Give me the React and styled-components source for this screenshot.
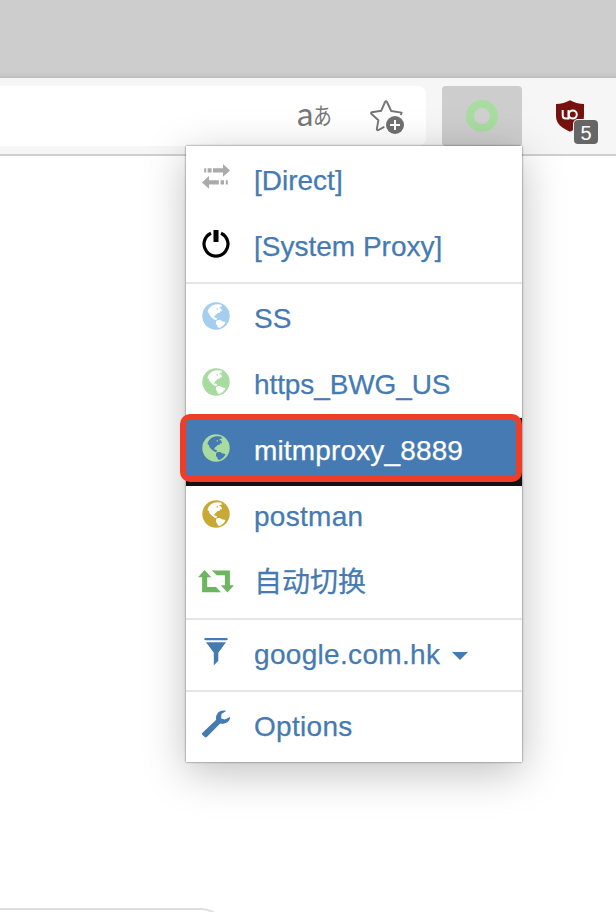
import React from "react";
import styled, { createGlobalStyle } from "styled-components";

const Global = createGlobalStyle`
  * { box-sizing: border-box; }
  html, body { margin: 0; height: 912px; overflow: hidden; background: #fff; }
  body { font-family: "Liberation Sans", "Noto Sans CJK SC", sans-serif; }
  svg { display: block; flex: none; }
`;

const Page = styled.div`
  position: relative;
  display: flex;
  flex-direction: column;
  width: 616px;
  height: 912px;
  overflow: hidden;
  background: #fff;
`;

const TabStrip = styled.div`
  height: 78px;
  flex: none;
  background: linear-gradient(#cdcdcd 72px, #c3c3c3);
  border-bottom: 1px solid #bcbcbc;
`;

const Toolbar = styled.div`
  display: flex;
  flex: none;
  height: 78px;
  padding-top: 8px;
  background: #f6f6f6;
  border-bottom: 2px solid #cfcfcf;
`;

const AddressBar = styled.div`
  display: flex;
  align-items: center;
  justify-content: flex-end;
  gap: 37px;
  width: 426px;
  height: 60px;
  padding-right: 20px;
  background: #fff;
  border-radius: 0 8px 8px 0;
`;

const Translate = styled.div`
  display: flex;
  align-items: baseline;
  width: 36px;
  height: 38px;
  color: #767676;
  font: 33px/32px Lato, sans-serif;
  white-space: nowrap;
`;

const Kana = styled.span`
  display: inline-block;
  font: 23px/32px "Noto Sans CJK JP", sans-serif;
  transform: translateY(-2px) scaleX(0.82);
  transform-origin: left;
`;

const ProxyButton = styled.div`
  display: flex;
  align-items: center;
  justify-content: center;
  width: 80px;
  height: 60px;
  margin-left: 16px;
  background: #cdcdcd;
  border-radius: 4px;
`;

const Ring = styled.div`
  width: 32px;
  height: 32px;
  border: 8px solid #a8dca0;
  border-radius: 50%;
  background: #d0d0d0;
`;

const Blocker = styled.div`
  position: relative;
  width: 44px;
  height: 48px;
  margin: 13px 0 0 33px;
`;

const Badge = styled.span`
  position: absolute;
  left: 19px;
  top: 21px;
  width: 24px;
  height: 24px;
  border-radius: 4px;
  background: #666;
  color: #fff;
  font-size: 20px;
  line-height: 27px;
  text-align: center;
  box-shadow: 0 0 0 1px #f6f6f6;
`;

const Menu = styled.div`
  position: absolute;
  left: 186px;
  top: 146px;
  width: 336px;
  height: 616px;
  padding-top: 2px;
  background: #fff;
  box-shadow: 0 0 2px rgba(0, 0, 0, 0.6), 0 10px 40px rgba(0, 0, 0, 0.25);
`;

const Item = styled.div`
  display: flex;
  align-items: center;
  height: 66px;
  color: ${(p) => (p.$active ? "#fff" : "#457ab2")};
  font-size: 28px;
  letter-spacing: ${(p) => p.$track || 0}px;
  -webkit-text-stroke: 0.25px currentColor;
  background: ${(p) => (p.$active ? "#457ab2" : "transparent")};
  box-shadow: ${(p) => (p.$active ? "0 2px 0 #111, inset 0 -4px 0 #111, inset -6px 0 0 #111" : "none")};
  border-radius: ${(p) => (p.$active ? "4px 0 0 0" : "0")};
`;

const IconSlot = styled.span`
  display: flex;
  justify-content: center;
  width: 60px;
  margin: ${(p) => -2 * p.$lift}px 8px ${(p) => 2 * p.$lift}px 0;
`;

const Label = styled.span`
  white-space: nowrap;
  line-height: 40px;
`;

const Divider = styled.div`
  height: 2px;
  margin: 2px 0;
  background: #e5e5e5;
`;

const Caret = styled.span`
  margin: 1px 0 0 12px;
  border: 8px solid transparent;
  border-top-color: #457ab2;
  border-bottom: 0;
`;

const Highlight = styled.div`
  position: absolute;
  left: 180px;
  top: 414px;
  width: 342px;
  height: 68px;
  border: 6px solid #ee3e27;
  border-radius: 10px;
`;

const SearchEdge = styled.div`
  position: absolute;
  left: -40px;
  top: 908px;
  width: 270px;
  height: 60px;
  border: 2px solid #dedee4;
  border-radius: 30px;
`;

const Globe = ({ color, land = "#fff" }) => (
  <svg width="28" height="28" viewBox="0 0 28 28">
    <circle cx="14" cy="14" r="13.7" fill={color} />
    <path fill={land} d="M5.6 9 7 6.2 9.6 3.8 13 2.6 15.6 2.3 18.6 2.6 20.4 4.2 17.6 5 17.4 6.2 19 6.3 20 8.8 19.1 9.8 18 9 18 10.6 15.8 10.9 13.6 13 12.6 13.8 12.3 15.4 14.8 16 14.6 18.3 12.2 17.4 9.3 15.2 7.4 13 7 11 5.8 10.6Z" />
    <path fill={land} d="M14 19.4 15.5 18 18.2 18 20 19.3 23.4 20 22.8 21.7 21 23.7 17.7 26 15.7 25.3 15.5 23.7 14 22Z" />
    <path fill={color} d="M14.6 6.2h1.4v1.2h-1.4z" />
  </svg>
);

const Exchange = () => (
  <svg width="28" height="25" viewBox="0 0 28 25" fill="#aaa">
    <path d="M2.2 4.2h2v4.4h-2zm3.4 0h4v4.4h-4zm5.4 0h10V0l7 6.4-7 6.4V8.6H11z" />
    <path d="M25.8 16.2h-2v4.4h2zm-3.8 0h-3.4v4.4H22zm-5.2 0H7V12L0 18.4l7 6.4v-4.2h9.8z" />
  </svg>
);

const Power = () => (
  <svg width="28" height="28" viewBox="0 0 28 28">
    <path d="M9 3.2A12 12 0 1 0 19 3.2" fill="none" stroke="#000" strokeWidth="3.2" />
    <path d="M11.5 0h5v12h-5z" />
  </svg>
);

const Retweet = () => (
  <svg width="36" height="23" viewBox="0 0 36 23" fill="#6bb65f">
    <path d="M6.5 0 13.3 7.3H9.2V17H18l5 5.2H4.1V7.3H0z" />
    <path d="M29.5 22.5 36 15.2h-4.1V.6H13.8l5 4.7h8.1v9.9h-4.1z" />
  </svg>
);

const Funnel = () => (
  <svg width="24" height="28" viewBox="0 0 24 28" fill="#457ab2">
    <rect x=".3" y="0" width="23.4" height="2.2" rx="1" />
    <path d="M2 4.3h20l-7.7 10.5v8L9.8 27.5V14.8z" />
  </svg>
);

const Wrench = () => (
  <svg width="28" height="28" viewBox="0 0 28 28" fill="#457ab2">
    <path d="M24.2.9C18.4-1 13 3.4 14.2 9.8L.5 22.8Q-.5 23.9.5 24.9l2.2 2.2q1 .9 2.1 0L18.2 13.6C23.6 14.6 28.4 11.4 28 7L22.8 9.4 19.2 8.4 19.4 4z" />
  </svg>
);

const Star = () => (
  <svg width="36" height="36" viewBox="0 0 36 36">
    <path d="M31 16.4 31.6 14.6 21.2 13 17 4Q16 2.6 15 4L11.2 12.8 1.8 14.2Q.4 14.8 1.6 16L8.4 22.2 6.8 31.2Q7 32.8 8.6 32L13.7 29.2" fill="none" stroke="#757575" strokeWidth="1.9" strokeLinejoin="round" strokeLinecap="round" />
    <circle cx="25" cy="27" r="9" fill="#707070" />
    <path d="M25 22v10M20 27h10" stroke="#fff" strokeWidth="2" />
  </svg>
);

const Shield = () => (
  <svg width="30" height="34" viewBox="0 0 30 34">
    <path d="M15 1.3C11 3.7 6 5 1 5v12c0 8 6 12 14 15.7C23 29 29 25 29 17V5C24 5 19 3.7 15 1.3" fill="#75120d" />
    <path d="M7.7 11v5.4a3 3 0 0 0 3 3h2.8V11" fill="none" stroke="#fff" strokeWidth="2" />
    <circle cx="17.8" cy="15.6" r="4" fill="none" stroke="#fff" strokeWidth="2" />
  </svg>
);

const Row = ({ icon, children, active, track, caret, lift = 1.5 }) => (
  <Item $active={active} $track={track}>
    <IconSlot $lift={lift}>{icon}</IconSlot>
    <Label>{children}</Label>
    {caret && <Caret />}
  </Item>
);

export default function App() {
  return (
    <Page>
      <Global />
      <TabStrip />
      <Toolbar>
        <AddressBar>
          <Translate>a<Kana>あ</Kana></Translate>
          <Star />
        </AddressBar>
        <ProxyButton><Ring /></ProxyButton>
        <Blocker>
          <Shield />
          <Badge>5</Badge>
        </Blocker>
      </Toolbar>
      <Menu>
        <Row lift={2.5} icon={<Exchange />}>[Direct]</Row>
        <Row icon={<Power />}>[System Proxy]</Row>
        <Divider />
        <Row icon={<Globe color="#a4cdee" />}>SS</Row>
        <Row track={-0.1} icon={<Globe color="#a8dba0" />}>https_BWG_US</Row>
        <Row active track={0.15} icon={<Globe color="#a8dba0" land="#457ab2" />}>mitmproxy_8889</Row>
        <Row track={0.3} icon={<Globe color="#c9a936" />}>postman</Row>
        <Row lift={1} icon={<Retweet />}>自动切换</Row>
        <Divider />
        <Row caret track={0.32} icon={<Funnel />}>google.com.hk</Row>
        <Divider />
        <Row track={0.3} icon={<Wrench />}>Options</Row>
      </Menu>
      <Highlight />
      <SearchEdge />
    </Page>
  );
}
